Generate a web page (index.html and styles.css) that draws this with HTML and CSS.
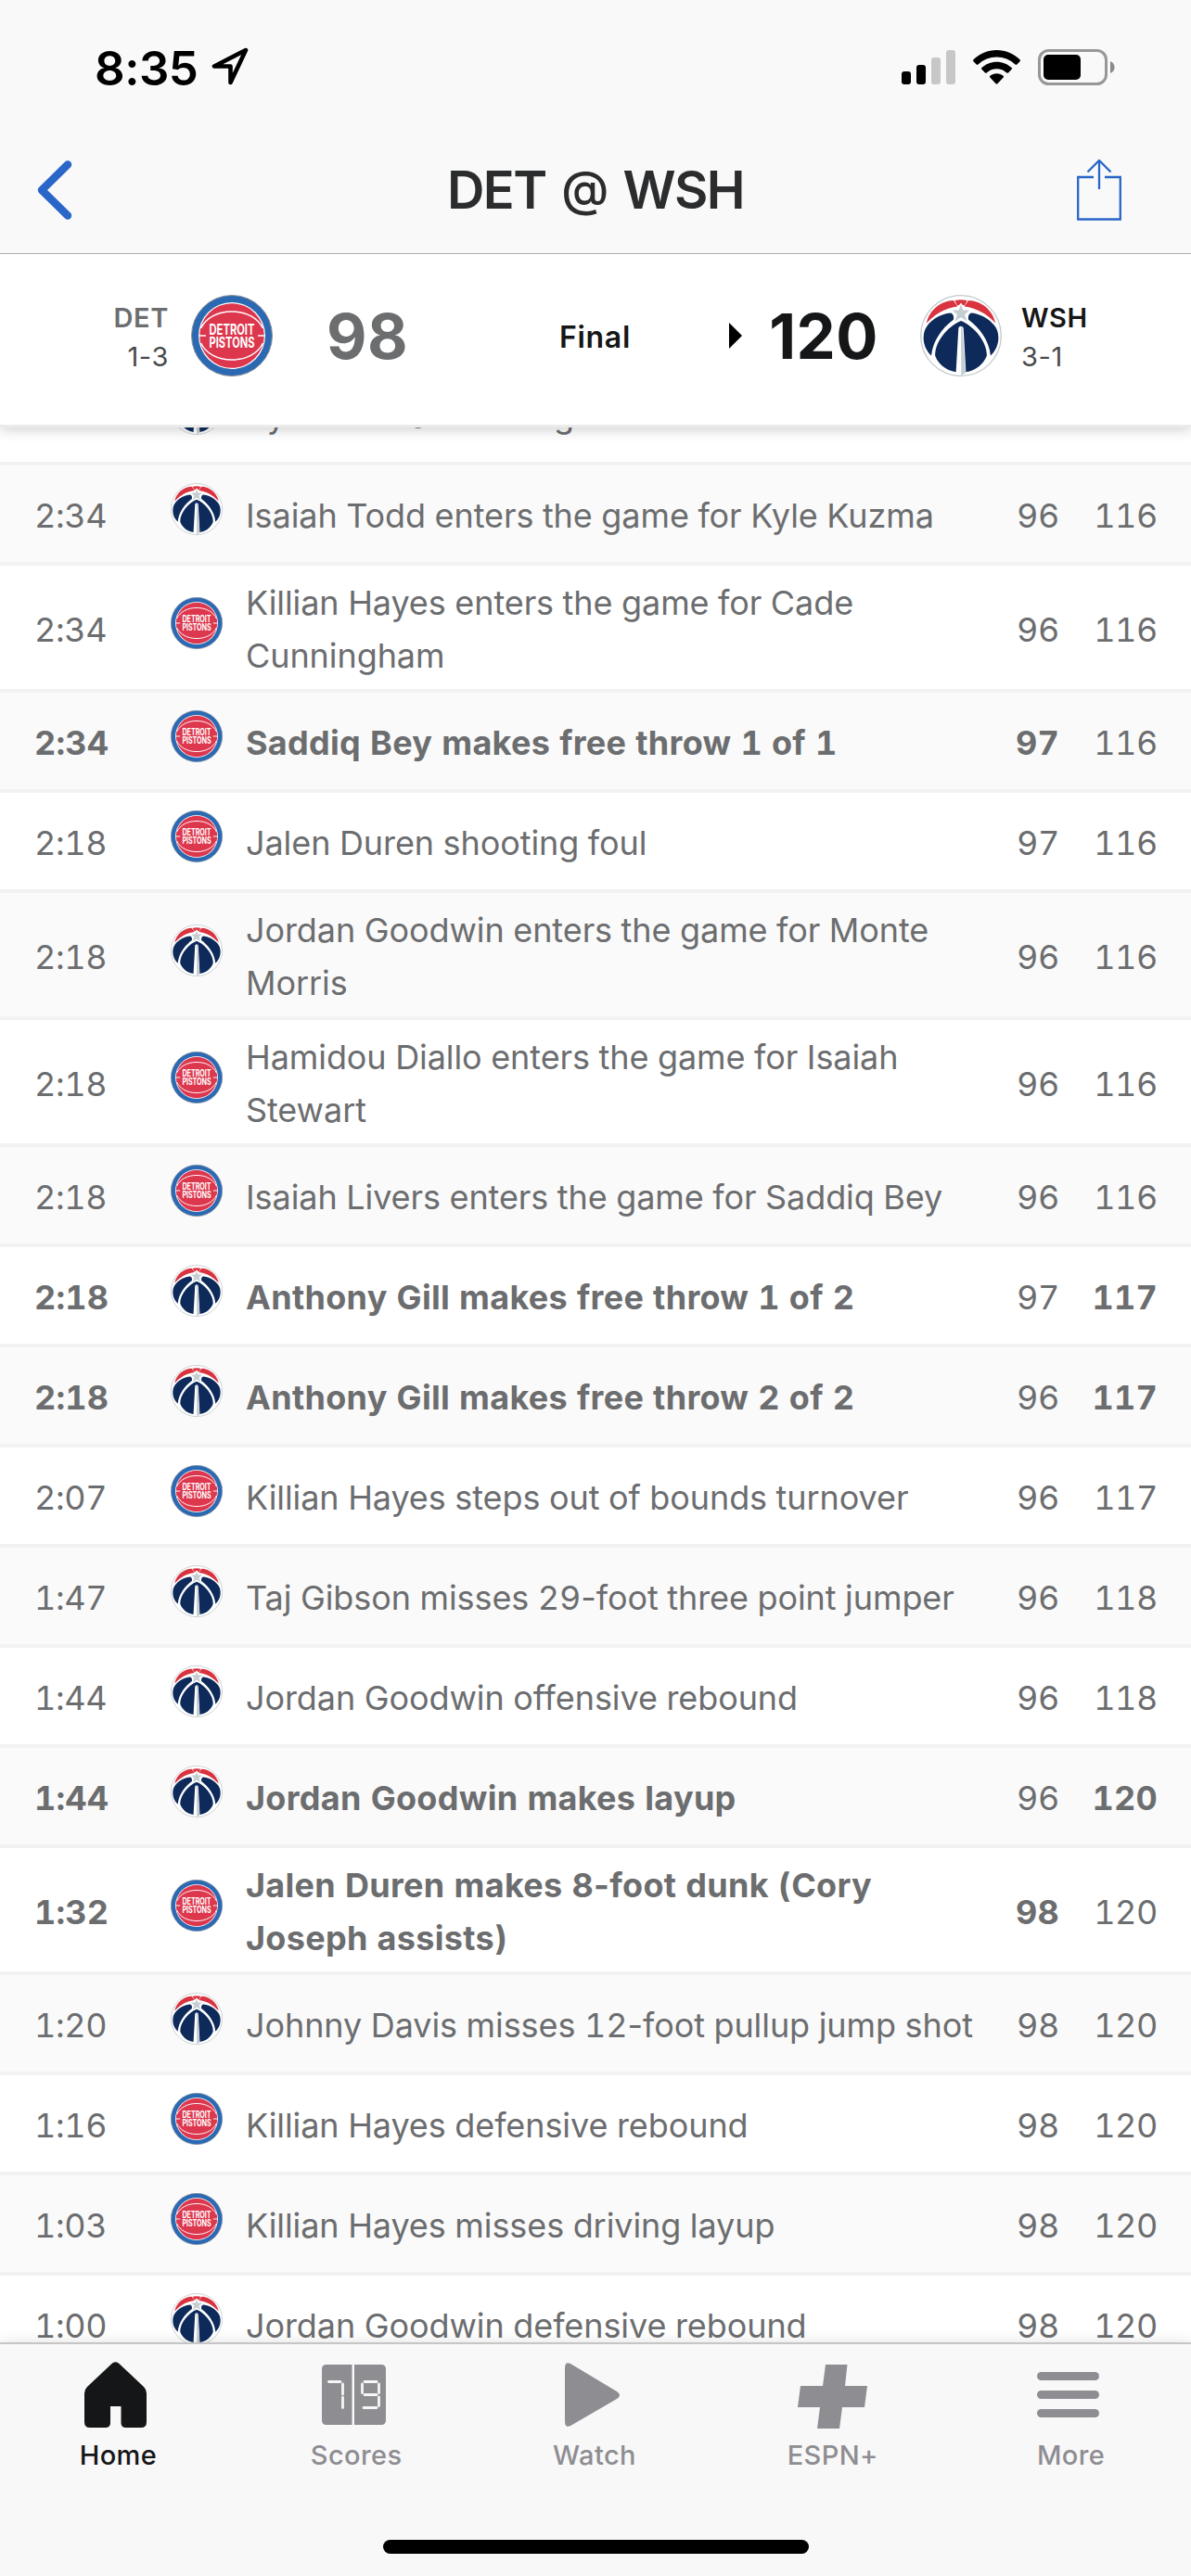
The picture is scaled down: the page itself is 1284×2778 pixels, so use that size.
FILE: index.html
```html
<!DOCTYPE html>
<html lang="en">
<head>
  <meta charset="UTF-8">
  <meta name="viewport" content="width=device-width, initial-scale=1.0">
  <title>DET @ WSH</title>
  <link rel="stylesheet" href="styles.css">
</head>
<body>

  <!-- team logos -->
  <svg class="defs" width="0" height="0">
    <symbol id="det" viewBox="0 0 88 88">
      <circle cx="44" cy="44" r="43.500" fill="#2b6ab3" stroke="#8b9099" stroke-width="1"/>
      <circle cx="44" cy="44" r="36" fill="#fff"/>
      <circle cx="44" cy="44" r="34.800" fill="#dd374e"/>
      <path d="M10.500 36C16 25 28 18 44 18s28 7 33.500 18M10.500 52C16 63 28 70 44 70s28-7 33.500-18M8 44h8M72 44h8" fill="none" stroke="#fff" stroke-width="1.500"/>
      <text x="19.500" y="42.500" textLength="49" lengthAdjust="spacingAndGlyphs">DETROIT</text>
      <text x="19.500" y="57" textLength="49" lengthAdjust="spacingAndGlyphs">PISTONS</text>
    </symbol>
    <symbol id="wsh" viewBox="23 19 262 262">
      <circle cx="154" cy="150" r="129" fill="#fff" stroke="#c4cace" stroke-width="4"/>
      <path d="M43 110C52 68 88 38 130 37L143 56C106 61 72 78 43 110zM265 110C256 68 220 38 178 37L165 56C202 61 236 78 265 110zM134 37Q154 32 174 37L166 53L159 51L154 44L149 51L142 53z" fill="#d9333f"/>
      <path d="M59 214C28 186 28 140 46 118C64 94 96 78 122 77Q133 83 130 99C94 125 64 165 59 214zM249 214C280 186 280 140 262 118C244 94 212 78 186 77Q175 83 178 99C214 125 244 165 249 214z" fill="#0d2a5b"/>
      <path d="M154 102C114 118 70 168 71 214C82 244 108 262 138 267L146 126C148 117 160 117 162 126L170 267C200 262 226 244 237 214C238 168 194 118 154 102z" fill="#0d2a5b"/>
      <path d="M154 121H158L169 270L155 278zM154 50L161 68L182 68L166 82L173 104L154 91L135 104L142 82L126 68L147 68z" fill="#c4cdd2"/>
    </symbol>
  </svg>

  <div class="status-bar">
    <span class="clock">8:35</span>
    <svg class="location" width="42" height="42" viewBox="0 0 42 42">
      <path d="M38 3L4 20.500H21.500V38z" fill="none" stroke="#000" stroke-width="4.600" stroke-linejoin="round"/>
    </svg>
    <svg class="signal" width="58" height="37" viewBox="0 0 58 37">
      <rect x="0" y="23" width="10" height="14" rx="3"/>
      <rect x="16" y="16" width="10" height="21" rx="3"/>
      <rect x="32" y="8" width="10" height="29" rx="3" fill="#c7c7c7"/>
      <rect x="48" y="0" width="10" height="37" rx="3" fill="#c7c7c7"/>
    </svg>
    <svg class="wifi" width="51" height="37" viewBox="0 0 51 37">
      <path d="M25.500 0C35 0 44 4 50.500 10.300c.6.6.6 1.300 0 1.900L47.300 15.600c-.5.5-1.200.5-1.800 0C40 10.500 33 7.600 25.500 7.600S11 10.500 5.500 15.600c-.6.5-1.300.5-1.800 0L.5 12.200c-.6-.6-.6-1.300 0-1.900C7 4 16 0 25.500 0z"/>
      <path d="M25.500 12.700c6.200 0 11.900 2.400 16.100 6.300.6.6.6 1.200 0 1.800l-3.600 3.600c-.5.5-1.200.5-1.700 0-2.900-2.600-6.600-4.200-10.800-4.200s-7.900 1.600-10.800 4.200c-.5.5-1.200.5-1.700 0L9.400 20.800c-.6-.6-.6-1.200 0-1.800 4.200-3.900 9.900-6.300 16.100-6.300z"/>
      <path d="M25.500 25.200c2.700 0 5.200 1 7.100 2.600.6.500.6 1.200.1 1.800l-6.300 6.600c-.5.5-1.200.5-1.800 0l-6.300-6.600c-.5-.6-.5-1.300.1-1.800 1.900-1.600 4.400-2.600 7.100-2.600z"/>
    </svg>
    <svg class="battery" width="83" height="39" viewBox="0 0 83 39">
      <rect x="1.500" y="1.500" width="72" height="36" rx="10" fill="none" stroke="#979797" stroke-width="3"/>
      <rect x="6" y="6" width="40" height="27" rx="5"/>
      <path d="M78 13q4.500 2 4.500 6.500t-4.500 6.500z" fill="#8a8a8a"/>
    </svg>
  </div>

  <div class="nav-bar">
    <svg width="38" height="64" viewBox="0 0 38 64">
      <path d="M33 4.500L5 32l28 27.500" fill="none" stroke="#2966c8" stroke-width="8.500" stroke-linecap="round" stroke-linejoin="round"/>
    </svg>
    <h1>DET <span>@</span> WSH</h1>
    <svg width="48" height="66" viewBox="0 0 48 66">
      <path d="M18 19H1.200V64.500H46.800V19H30M24 32V1M11.500 13.500L24 1l12.500 12.500" fill="none" stroke="#2966c8" stroke-width="2.300"/>
    </svg>
  </div>

  <div class="score-header">
    <div class="team away">
      <b>DET</b>
      <span>1-3</span>
    </div>
    <svg class="team-logo"><use href="#det"/></svg>
    <div class="score loser">98</div>
    <div class="game-state">Final</div>
    <svg class="winner-arrow" width="14" height="28" viewBox="0 0 14 28"><path d="M0 0L14 14L0 28z"/></svg>
    <div class="score winner">120</div>
    <svg class="team-logo"><use href="#wsh"/></svg>
    <div class="team home">
      <b>WSH</b>
      <span>3-1</span>
    </div>
  </div>

  <div class="feed">
    <div class="plays">
      <div class="play">
        <time>2:34</time>
        <svg><use href="#wsh"/></svg>
        <p>Kyle Kuzma shooting foul</p>
        <span>96</span><span>116</span>
      </div>
      <div class="play">
        <time>2:34</time>
        <svg><use href="#wsh"/></svg>
        <p>Isaiah Todd enters the game for Kyle Kuzma</p>
        <span>96</span><span>116</span>
      </div>
      <div class="play">
        <time>2:34</time>
        <svg><use href="#det"/></svg>
        <p>Killian Hayes enters the game for Cade Cunningham</p>
        <span>96</span><span>116</span>
      </div>
      <div class="play scoring">
        <time>2:34</time>
        <svg><use href="#det"/></svg>
        <p>Saddiq Bey makes free throw 1 of 1</p>
        <span class="scored">97</span><span>116</span>
      </div>
      <div class="play">
        <time>2:18</time>
        <svg><use href="#det"/></svg>
        <p>Jalen Duren shooting foul</p>
        <span>97</span><span>116</span>
      </div>
      <div class="play">
        <time>2:18</time>
        <svg><use href="#wsh"/></svg>
        <p>Jordan Goodwin enters the game for Monte Morris</p>
        <span>96</span><span>116</span>
      </div>
      <div class="play">
        <time>2:18</time>
        <svg><use href="#det"/></svg>
        <p>Hamidou Diallo enters the game for Isaiah Stewart</p>
        <span>96</span><span>116</span>
      </div>
      <div class="play">
        <time>2:18</time>
        <svg><use href="#det"/></svg>
        <p>Isaiah Livers enters the game for Saddiq Bey</p>
        <span>96</span><span>116</span>
      </div>
      <div class="play scoring">
        <time>2:18</time>
        <svg><use href="#wsh"/></svg>
        <p>Anthony Gill makes free throw 1 of 2</p>
        <span>97</span><span class="scored">117</span>
      </div>
      <div class="play scoring">
        <time>2:18</time>
        <svg><use href="#wsh"/></svg>
        <p>Anthony Gill makes free throw 2 of 2</p>
        <span>96</span><span class="scored">117</span>
      </div>
      <div class="play">
        <time>2:07</time>
        <svg><use href="#det"/></svg>
        <p>Killian Hayes steps out of bounds turnover</p>
        <span>96</span><span>117</span>
      </div>
      <div class="play">
        <time>1:47</time>
        <svg><use href="#wsh"/></svg>
        <p>Taj Gibson misses 29<i>-</i>foot three point jumper</p>
        <span>96</span><span>118</span>
      </div>
      <div class="play">
        <time>1:44</time>
        <svg><use href="#wsh"/></svg>
        <p>Jordan Goodwin offensive rebound</p>
        <span>96</span><span>118</span>
      </div>
      <div class="play scoring">
        <time>1:44</time>
        <svg><use href="#wsh"/></svg>
        <p>Jordan Goodwin makes layup</p>
        <span>96</span><span class="scored">120</span>
      </div>
      <div class="play scoring">
        <time>1:32</time>
        <svg><use href="#det"/></svg>
        <p>Jalen Duren makes 8<i>-</i>foot dunk (Cory Joseph assists)</p>
        <span class="scored">98</span><span>120</span>
      </div>
      <div class="play">
        <time>1:20</time>
        <svg><use href="#wsh"/></svg>
        <p>Johnny Davis misses 12<i>-</i>foot pullup jump shot</p>
        <span>98</span><span>120</span>
      </div>
      <div class="play">
        <time>1:16</time>
        <svg><use href="#det"/></svg>
        <p>Killian Hayes defensive rebound</p>
        <span>98</span><span>120</span>
      </div>
      <div class="play">
        <time>1:03</time>
        <svg><use href="#det"/></svg>
        <p>Killian Hayes misses driving layup</p>
        <span>98</span><span>120</span>
      </div>
      <div class="play">
        <time>1:00</time>
        <svg><use href="#wsh"/></svg>
        <p>Jordan Goodwin defensive rebound</p>
        <span>98</span><span>120</span>
      </div>
    </div>
  </div>

  <div class="tab-bar">
    <div class="tabs">
      <div class="tab active">
        <svg width="74" height="74" viewBox="0 0 74 74">
          <path d="M29 3.500q4.500-4.500 9 0L64 28q3 3 3 7v31q0 6-6 6H45q-5.500 0-5.500-5V49H28v18q0 5-5.500 5H6q-6 0-6-6V35q0-4 3-7z"/>
        </svg>
        <span>Home</span>
      </div>
      <div class="tab">
        <svg width="74" height="74" viewBox="1 0 74 74">
          <path d="M5 4h27.500v65H5q-5 0-5-5V9q0-5 5-5zM35 4h29q5 0 5 5v55q0 5-5 5H35z"/>
          <path d="M7.500 22.500H20M22.500 25v11M22.500 39.500v11M46 22.500h13M61.500 25v9.500M43.500 25v9.500M46 36.500h13M61.500 39v9.500M45 50.500h14" fill="none" stroke="#f7f7f7" stroke-width="2.800" stroke-linecap="round"/>
        </svg>
        <span>Scores</span>
      </div>
      <div class="tab">
        <svg width="74" height="74" viewBox="0 0 74 74">
          <path d="M4 8q0-8 6-5L60 33q6 4 0 8L10 70q-6 3-6-5z"/>
        </svg>
        <span>Watch</span>
      </div>
      <div class="tab">
        <svg width="74" height="74" viewBox="2 1 74 74">
          <path d="M30 5h23.500L51 28h24l-3 23H48l-3 23H21l3-23H0l3-23h24z"/>
        </svg>
        <span>ESPN+</span>
      </div>
      <div class="tab">
        <svg width="74" height="74" viewBox="2 0 74 74">
          <rect x="1" y="12" width="67" height="9" rx="4.500"/>
          <rect x="1" y="32" width="67" height="9" rx="4.500"/>
          <rect x="1" y="52" width="67" height="9" rx="4.500"/>
        </svg>
        <span>More</span>
      </div>
    </div>
    <div class="home-indicator"></div>
  </div>

</body>
</html>
```
FILE: styles.css
```css
* {
  box-sizing: border-box;
}

body {
  margin: 0;
  width: 1284px;
  height: 2778px;
  font-family: Inter, sans-serif;
  background-color: #ffffff;
  display: flex;
  flex-direction: column;
  overflow: hidden;
}

svg {
  display: block;
  flex: none;
}

.defs {
  height: 0;
}

symbol text {
  font-family: Inter, sans-serif;
  font-size: 15.5px;
  font-weight: 700;
  fill: #ffffff;
}

.status-bar {
  height: 144px;
  flex: none;
  display: flex;
  align-items: center;
  padding: 0 82px 0 102px;
  background-color: #f9f9f9;
}

.clock {
  font-size: 51px;
  font-weight: 600;
  letter-spacing: -0.5px;
  padding-top: 2px;
  width: 125px;
}

.location {
  margin-right: auto;
}

.wifi {
  margin: 0 19px;
}

.nav-bar {
  position: relative;
  z-index: 3;
  height: 130px;
  flex: none;
  display: flex;
  align-items: center;
  padding: 0 75px 8px 40px;
  background-color: #f9f9f9;
  border-bottom: 1px solid #adadad;
}

.nav-bar h1 {
  flex: 1;
  margin: 0 0 0 45px;
  text-align: center;
  font-size: 56px;
  line-height: 68px;
  font-weight: 600;
  letter-spacing: -1.5px;
  word-spacing: 4px;
  color: #2b2c2d;
}

.nav-bar h1 span {
  font-size: 52px;
  font-weight: 500;
  line-height: 1;
  vertical-align: 3px;
}

.score-header {
  position: relative;
  z-index: 2;
  height: 187px;
  flex: none;
  display: flex;
  align-items: center;
  padding: 0 0 9px 81px;
  background-color: #ffffff;
  border-bottom: 3px solid #ebebeb;
  box-shadow: 0 2px 14px rgba(0, 0, 0, 0.2);
}

.team {
  display: flex;
  flex-direction: column;
  width: 101px;
  padding-top: 4px;
  font-size: 29px;
  line-height: 42px;
  letter-spacing: 0.6px;
  color: #48494a;
}

.team b {
  font-weight: 600;
}

.away {
  text-align: right;
}

.away b {
  color: #6c6d6f;
}

.home {
  margin-left: 21px;
}

.home b {
  color: #151617;
}

.team-logo {
  width: 88px;
  height: 88px;
  margin-left: 24px;
}

.score {
  font-size: 67px;
  font-weight: 700;
  padding-top: 2px;
}

.loser {
  width: 100px;
  margin-left: 58px;
  letter-spacing: 0.5px;
  color: #6c6d6f;
}

.game-state {
  width: 82px;
  margin-left: 151px;
  padding-top: 4px;
  font-size: 32px;
  font-weight: 600;
  letter-spacing: 0.7px;
  color: #151617;
}

.winner-arrow {
  margin-left: 101px;
}

.winner {
  width: 147px;
  text-align: right;
  letter-spacing: 0.5px;
  color: #151617;
}

.winner + .team-logo {
  margin-left: 45px;
}

.feed {
  flex: 1;
  min-height: 0;
  overflow: hidden;
}

/* list is scrolled part way under the score header */
.plays {
  margin-top: -67px;
}

.play {
  display: grid;
  grid-template-columns: 147px 81px 797px 80px 106px;
  align-items: center;
  min-height: 108px;
  padding: 9px 0 10px 37px;
  border-bottom: 4px solid #f1f3f3;
  font-size: 36px;
  font-variant-numeric: tabular-nums;
  line-height: 57px;
  letter-spacing: -0.08px;
  color: #6c6d6f;
}

.play:nth-child(even) {
  background-color: #fafafa;
}

.play svg {
  width: 56px;
  height: 56px;
  margin-bottom: 9px;
}

.play time,
.play p,
.play span {
  margin: 3px 0 -3px;
}

/* keep the hyphen in "29-foot" at its normal width */
.play i {
  font-style: normal;
  font-variant-numeric: normal;
}

.play time,
.play span {
  letter-spacing: -0.4px;
}

.play span {
  text-align: right;
}

.scoring p {
  font-weight: 700;
  letter-spacing: 0.3px;
}

.scoring time,
.play .scored {
  font-weight: 700;
  letter-spacing: 0.2px;
}

.tab-bar {
  position: relative;
  z-index: 2;
  height: 252px;
  flex: none;
  background-color: #f8f8f8;
  border-top: 2px solid #c6c6c6;
  box-shadow: 0 0 14px rgba(0, 0, 0, 0.12);
}

.tabs {
  display: flex;
  padding-top: 18px;
}

.tab {
  flex: 1;
  display: flex;
  flex-direction: column;
  align-items: center;
  font-size: 29px;
  font-weight: 500;
  line-height: 36px;
  letter-spacing: 0.4px;
  color: #8e8d92;
  fill: #8e8d92;
}

.tab svg {
  overflow: visible;
  margin-bottom: 10px;
}

.tab span {
  margin-right: 2px;
}

.active {
  color: #151617;
  fill: #151617;
}

.home-indicator {
  width: 459px;
  height: 15px;
  margin: 73px auto 0;
  border-radius: 8px;
  background-color: #000000;
}
```
